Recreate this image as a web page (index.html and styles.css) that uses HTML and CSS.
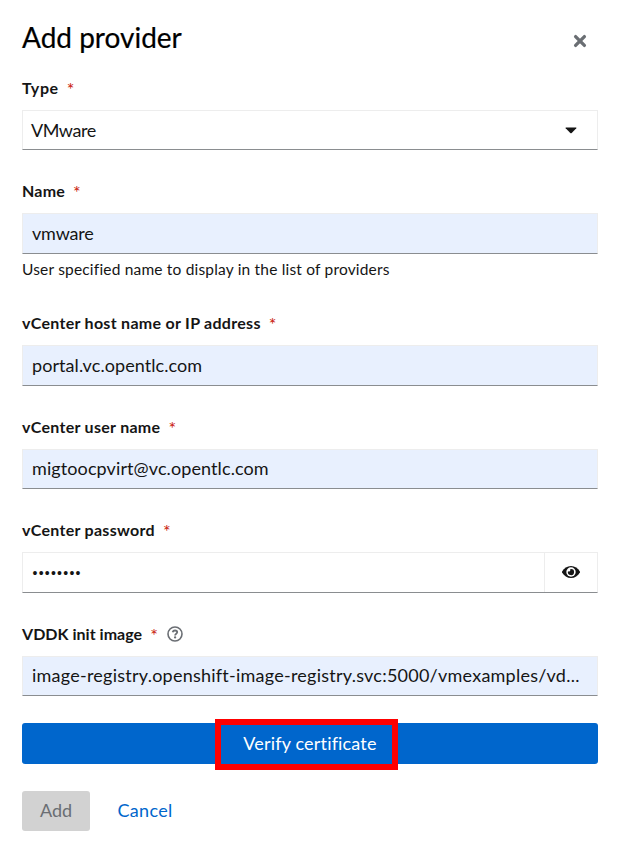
FILE: index.html
```html
<!DOCTYPE html>
<html lang="en">
<head>
<meta charset="utf-8">
<title>Add provider</title>
<link rel="stylesheet" href="styles.css">
</head>
<body>
<main class="modal">
  <header class="header">
    <h1 class="title">Add provider</h1>
    <button class="close" aria-label="Close">
      <svg width="14" height="14" viewBox="0 0 14 14"><path d="M2.600 2.600l8.800 8.800M11.400 2.600l-8.800 8.800" fill="none" stroke="#6a6e73" stroke-width="3.300" stroke-linecap="round"/></svg>
    </button>
  </header>
  <form class="form">
    <section class="group">
      <div class="label"><span class="label-text type">Type</span><span class="required">*</span></div>
      <div class="control select"><span class="value select-value">VMware</span>
        <svg class="caret" width="12" height="7" viewBox="0 0 12 7"><path d="M1.100.4h9.800q1 .2.4.9L6.700 6q-.7.7-1.400 0L.7 1.300Q.1.6 1.100.4z" fill="#151515"/></svg>
      </div>
    </section>
    <section class="group">
      <div class="label"><span class="label-text name">Name</span><span class="required">*</span></div>
      <div class="control tall filled"><span class="value name-value">vmware</span></div>
      <div class="helper"><span class="helper-text">User specified name to display in the list of providers</span></div>
    </section>
    <section class="group">
      <div class="label"><span class="label-text host">vCenter host name or IP address</span><span class="required">*</span></div>
      <div class="control tall filled"><span class="value host-value">portal.vc.opentlc.com</span></div>
    </section>
    <section class="group">
      <div class="label"><span class="label-text user">vCenter user name</span><span class="required">*</span></div>
      <div class="control filled"><span class="value user-value">migtoocpvirt@vc.opentlc.com</span></div>
    </section>
    <section class="group">
      <div class="label"><span class="label-text password">vCenter password</span><span class="required">*</span></div>
      <div class="control tall secret"><span class="dots">••••••••</span>
        <div class="reveal">
          <svg width="18" height="14" viewBox="0 0 18 14"><path d="M.1 7.500Q-.1 7 .1 6.500C2 3 5.200.9 9 .9s7 2.100 8.900 5.600q.2.5 0 1C16 11 12.800 13.100 9 13.100S2 11 .1 7.500z" fill="#151515"/><circle cx="9" cy="7" r="4.700" fill="#fff"/><path d="M9 3.900A3.100 3.100 0 1 1 6 6.200 1.600 1.600 0 0 0 8.200 4Q8.600 3.900 9 3.900z" fill="#151515"/></svg>
        </div>
      </div>
    </section>
    <section class="group">
      <div class="label"><span class="label-text vddk">VDDK init image</span><span class="required">*</span>
        <svg class="help" width="16" height="16" viewBox="0 0 16 16" fill="none" stroke="#6a6e73"><circle cx="8" cy="8" r="7" stroke-width="1.600"/><path d="M5.600 6.300C6 5 6.900 4.500 8 4.500c1.300 0 2.200.7 2.200 1.800C10.200 7.700 8.100 7.700 8.100 9.400" stroke-width="1.800"/><circle cx="8.100" cy="11.400" r="1.150" fill="#6a6e73" stroke="none"/></svg>
      </div>
      <div class="control filled"><span class="value image-value">image-registry.openshift-image-registry.svc:5000/vmexamples/vd...</span></div>
    </section>
  </form>
  <button class="verify"><span class="verify-text">Verify certificate</span><span class="highlight"></span></button>
  <footer class="actions">
    <button class="add" disabled><span class="add-text">Add</span></button>
    <button class="cancel"><span class="cancel-text">Cancel</span></button>
  </footer>
</main>
</body>
</html>
```
FILE: styles.css
```css
* { box-sizing: border-box; }
body { margin: 0; background: #fff; color: #151515; font-family: Lato, "Liberation Sans", sans-serif; }
button { font: inherit; border: 0; padding: 0; margin: 0; }
svg { display: block; flex: none; }
.modal { padding: 0 21px 0 22px; height: 847px; overflow: hidden; }
.header { height: 78px; display: flex; justify-content: space-between; align-items: flex-start; padding: 19px 11px 0 0; }
.title { margin: 0; font-size: 28px; font-weight: 400; line-height: 36px; color: #000; -webkit-text-stroke: .2px #000; letter-spacing: 0; }
.close { background: none; margin-top: 15px; }
.form { display: flex; flex-direction: column; gap: 31px; }
.label { height: 32px; display: flex; align-items: flex-start; }
.label-text { font-size: 16px; line-height: 20px; font-weight: 700; white-space: nowrap; letter-spacing: .29px; }
.type { letter-spacing: .6px; }
.name { letter-spacing: .2px; }
.vddk { letter-spacing: .03px; }
.required { font-size: 18px; line-height: 22px; color: #c9190b; margin-left: 8px; width: 8px; }
.help { margin: 2px 0 0 8.500px; }
.control { height: 40px; display: flex; align-items: center; border: 1px solid #ededed; border-bottom-color: #8a8d90; padding: 0 9px; }
.tall { height: 41px; }
.filled { background: #e8f0fe; }
.value { font-size: 18px; line-height: 26px; padding-bottom: 2px; white-space: nowrap; }
.select-value { letter-spacing: -.45px; padding-bottom: 0; }
.name-value { letter-spacing: -.2px; }
.host-value { letter-spacing: .07px; }
.user-value { letter-spacing: .1px; }
.image-value { letter-spacing: .24px; }
.select { padding: 0 20px 0 8px; justify-content: space-between; }
.secret { padding: 0; justify-content: space-between; }
.dots { font: 14px/28px "Liberation Sans", sans-serif; letter-spacing: 1.250px; padding-left: 9.500px; }
.reveal { width: 53px; height: 39px; border-left: 1px solid #ededed; display: flex; align-items: center; justify-content: center; padding-bottom: 1px; }
.helper { height: 28px; padding-top: 4px; }
.helper-text { display: block; width: max-content; font-size: 15.500px; line-height: 22px; letter-spacing: .185px; }
.verify { position: relative; display: flex; align-items: center; justify-content: center; width: 100%; height: 41px; margin-top: 27px; background: #06c; color: #fff; border-radius: 3px; font-size: 18px; letter-spacing: .17px; }
.verify-text, .add-text, .cancel-text { display: block; padding-bottom: 2px; }
.highlight { position: absolute; left: 193px; top: -4px; width: 183px; height: 51px; border: 6px solid #f00; }
.actions { display: flex; gap: 27.500px; margin-top: 27px; font-size: 18px; }
.add { width: 68px; height: 40px; border-radius: 3px; background: #d2d2d2; color: #6a6e73; }
.cancel { height: 40px; background: none; color: #06c; letter-spacing: .3px; }
```
